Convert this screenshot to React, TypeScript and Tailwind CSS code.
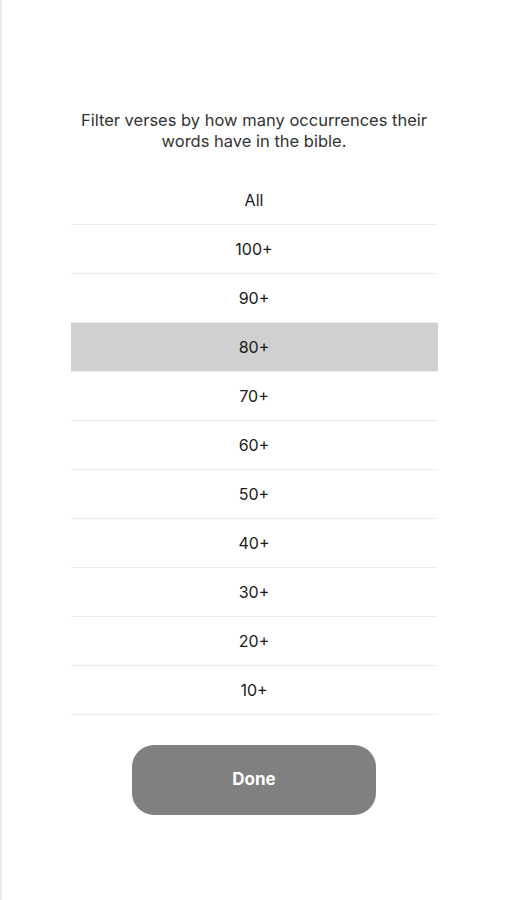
const options = ["All", "100+", "90+", "80+", "70+", "60+", "50+", "40+", "30+", "20+", "10+"];

export default function App() {
  const selected = "80+";

  return (
    <div className="min-h-[900px] bg-white border-l-2 border-[#ececec] font-['Inter',sans-serif]">
      <div className="pt-[110px] flex flex-col items-center">
        <p className="w-[370px] text-center text-[16.5px] leading-[21px] text-[#333333]">
          Filter verses by how many occurrences their words have in the bible.
        </p>

        <ul className="mt-[24px] w-[367px]">
          {options.map((opt) => (
            <li
              key={opt}
              className={`h-[49px] flex items-center justify-center border-b border-[#ececec] text-[16px] text-[#1a1a1a] ${
                opt === selected ? "bg-[#d0d0d0]" : "bg-white"
              }`}
            >
              {opt}
            </li>
          ))}
        </ul>

        <button className="mt-[30px] w-[244px] h-[70px] rounded-[22px] bg-[#808080] text-white text-[17px] font-bold">
          Done
        </button>
      </div>
    </div>
  );
}
